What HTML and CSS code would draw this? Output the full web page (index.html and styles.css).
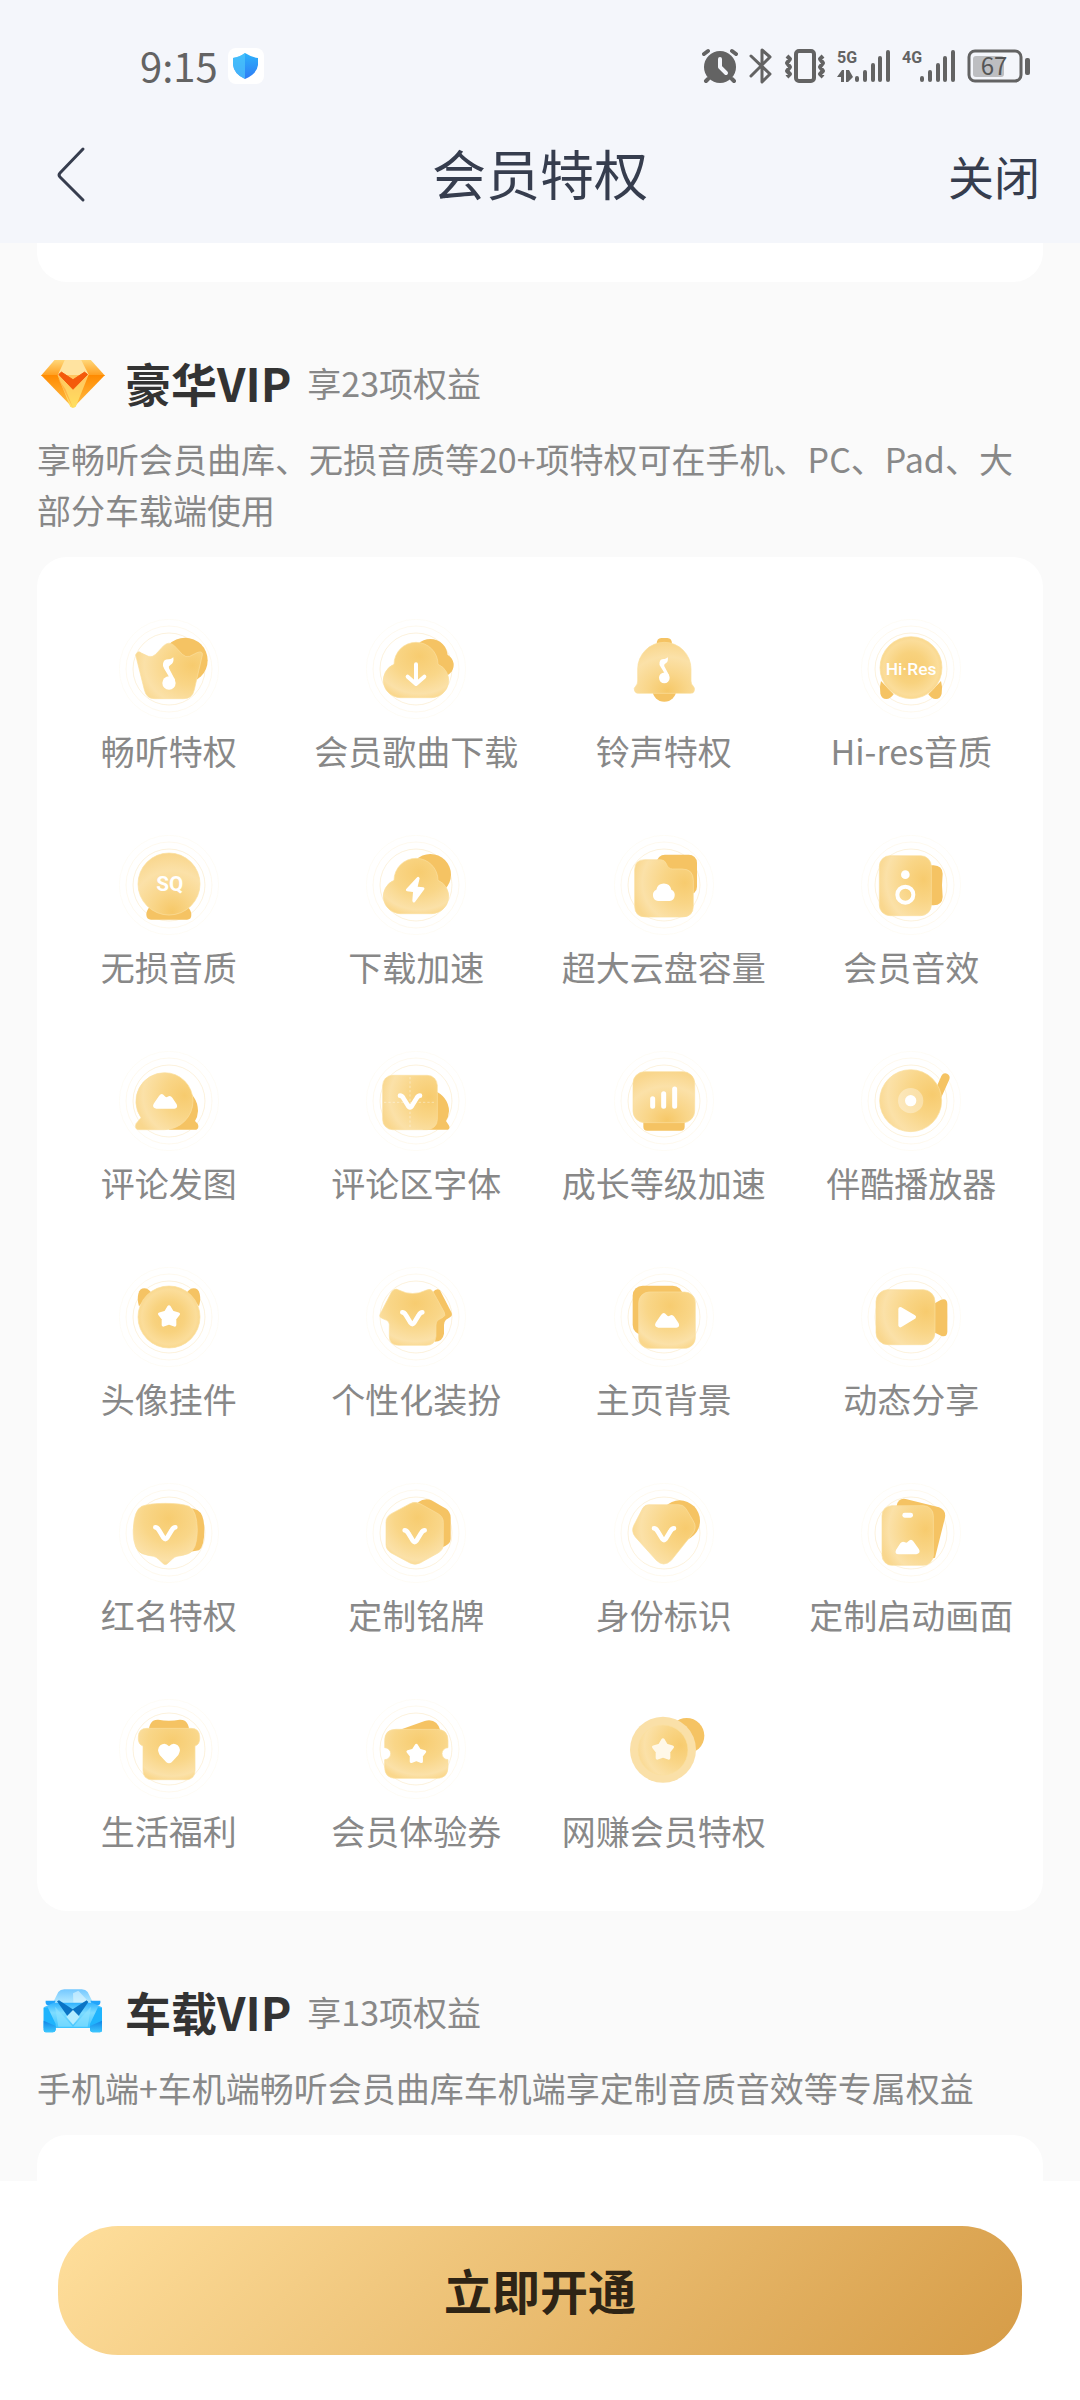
FILE: index.html
```html
<!DOCTYPE html>
<html lang="zh-CN">
<head>
    <meta charset="UTF-8">
    <meta name="viewport" content="width=device-width, initial-scale=1.0">
    <title>会员特权</title>
    <link rel="stylesheet" href="styles.css">
</head>
<body>
    <!-- 公用渐变和图形 -->
    <svg class="defs" width="0" height="0" aria-hidden="true">
        <defs>
            <radialGradient id="gTop" cx="0.55" cy="0.25" r="0.8">
                <stop offset="0" stop-color="#f7cc70"/>
                <stop offset="0.5" stop-color="#f9d688"/>
                <stop offset="0.85" stop-color="#fbe1a8"/>
                <stop offset="1" stop-color="#fad78c"/>
            </radialGradient>
            <radialGradient id="gRight" cx="0.85" cy="0.4" r="0.9">
                <stop offset="0" stop-color="#f7cb6e"/>
                <stop offset="0.4" stop-color="#f9d586"/>
                <stop offset="0.8" stop-color="#fbe1a8"/>
                <stop offset="1" stop-color="#f9d78e"/>
            </radialGradient>
            <radialGradient id="gBottom" cx="0.55" cy="0.95" r="0.95">
                <stop offset="0" stop-color="#f6c868"/>
                <stop offset="0.35" stop-color="#f9d68a"/>
                <stop offset="0.7" stop-color="#fbe1a8"/>
                <stop offset="1" stop-color="#f9d68c"/>
            </radialGradient>
            <radialGradient id="gMid" cx="0.5" cy="0.5" r="0.55">
                <stop offset="0" stop-color="#f7cb70"/>
                <stop offset="0.45" stop-color="#f8d27e"/>
                <stop offset="0.8" stop-color="#fbdd9a"/>
                <stop offset="1" stop-color="#f9d586"/>
            </radialGradient>
            <linearGradient id="diaTop" x1="0" y1="0" x2="0" y2="1">
                <stop offset="0" stop-color="#ffd779"/>
                <stop offset="1" stop-color="#ff9d1c"/>
            </linearGradient>
            <linearGradient id="diaSide" x1="0" y1="0" x2="0" y2="1">
                <stop offset="0" stop-color="#ff8a00"/>
                <stop offset="1" stop-color="#ffc04a"/>
            </linearGradient>
            <linearGradient id="diaMid" x1="0" y1="0" x2="0" y2="1">
                <stop offset="0" stop-color="#ffc460"/>
                <stop offset="1" stop-color="#ffe060"/>
            </linearGradient>
            <linearGradient id="carBody" x1="0" y1="0" x2="0" y2="1">
                <stop offset="0" stop-color="#2fb2ff"/>
                <stop offset="0.4" stop-color="#7ddcff"/>
                <stop offset="1" stop-color="#3cc3ff"/>
            </linearGradient>
            <linearGradient id="carRoof" x1="0" y1="0" x2="0" y2="1">
                <stop offset="0" stop-color="#74c8ff"/>
                <stop offset="1" stop-color="#b8ecff"/>
            </linearGradient>
            <linearGradient id="carWheel" x1="0" y1="0" x2="0" y2="1">
                <stop offset="0" stop-color="#1184e6"/>
                <stop offset="1" stop-color="#3cc8ff"/>
            </linearGradient>
            <linearGradient id="shield" x1="0" y1="0" x2="0" y2="1">
                <stop offset="0" stop-color="#2cb2fb"/>
                <stop offset="1" stop-color="#2f7bf5"/>
            </linearGradient>
        </defs>
        <g id="rings" fill="none" stroke="#f5cf7f">
            <circle cx="150" cy="150" r="149" stroke-width="2" stroke-opacity="0.1"/>
            <circle cx="150" cy="150" r="129" stroke-width="2" stroke-opacity="0.2"/>
            <circle cx="150" cy="150" r="108" stroke-width="2" stroke-opacity="0.4"/>
        </g>
        <path id="cloud" d="M102 236 A52 52 0 0 1 84 136 A66 66 0 0 1 216 136 A52 52 0 0 1 198 236 Z"/>
        <g id="note">
            <circle cx="150" cy="192" r="20"/>
            <path d="M132 134 Q134 120 150 121 Q156 121 163 115 Q166 133 154 138 Q147 142 150 148 L168 182 L160 190 L136 150 Q130 142 132 134 Z"/>
        </g>
        <path id="vee" fill="none" stroke="#fff" stroke-width="14" stroke-linecap="round" d="M102 134 Q108 134 113 143 L127 166 Q132 173 137 166 L151 143 Q156 134 162 134"/>
        <path id="mountain" fill="#fff" d="M112 173 Q98 170 104 158 L120 135 Q128 124 136 134 Q141 141 146 137 Q154 132 160 140 L173 160 Q178 172 166 173 Z"/>
        <polygon id="star" stroke-width="10" stroke-linejoin="round" points="0,-29 10,-13 28,-8 17,6 17,25 0,19 -17,25 -17,6 -28,-8 -10,-13"/>
    </svg>

    <header class="header">
        <div class="status-bar">
            <div class="status-left">
                <span class="time">9:15</span>
                <span class="app-badge">
                    <svg width="25" height="26" viewBox="0 0 25 26">
                        <path fill="url(#shield)" d="M12 0 Q18 4 25 5 V12 Q24 21 12 26 Q1 21 0 12 V5 Q7 4 12 0 Z"/>
                        <path fill="#4fc6fb" fill-opacity="0.7" d="M12 0 V26 Q1 21 0 12 V5 Q7 4 12 0 Z"/>
                    </svg>
                </span>
            </div>
            <div class="status-right">
                <svg width="36" height="36" viewBox="0 0 36 36">
                    <circle cx="18" cy="19" r="16" fill="#636363"/>
                    <path d="M2 6 L6 3 M30 3 L34 6 M6 31 L4 33 M30 31 L32 33" stroke="#636363" stroke-width="4" stroke-linecap="round"/>
                    <path d="M18 11 V19 L24 25" fill="none" stroke="#f4f6fb" stroke-width="4" stroke-linecap="round" stroke-linejoin="round"/>
                </svg>
                <svg width="24" height="36" viewBox="0 0 24 36">
                    <path d="M2 8 L21 26 L13 34 V2 L21 9 L2 28" fill="none" stroke="#636363" stroke-width="3" stroke-linecap="round" stroke-linejoin="round"/>
                </svg>
                <svg width="42" height="36" viewBox="0 0 42 36">
                    <rect x="12" y="3" width="18" height="30" rx="3" fill="none" stroke="#636363" stroke-width="4"/>
                    <path d="M3 8 L6 11 L3 15 L6 19 L3 23 L6 26 L3 29 M39 8 L36 11 L39 15 L36 19 L39 23 L36 26 L39 29" fill="none" stroke="#636363" stroke-width="4" stroke-linejoin="round"/>
                </svg>
                <svg width="54" height="36" viewBox="0 0 54 36">
                    <text class="net" x="0" y="15">5G</text>
                    <path d="M20 30 V32 M28 24 V32 M36 17 V32 M43 10 V32 M51 4 V32" stroke="#636363" stroke-width="4" stroke-linecap="round"/>
                    <path d="M0 29 L5 22 H7 V34 H4 V29 Z M9 22 H12 L16 29 L11 34 H9 Z" fill="#636363"/>
                </svg>
                <svg width="54" height="36" viewBox="0 0 54 36">
                    <text class="net" x="0" y="15">4G</text>
                    <path d="M20 30 V32 M28 24 V32 M36 17 V32 M43 10 V32 M51 4 V32" stroke="#636363" stroke-width="4" stroke-linecap="round"/>
                </svg>
                <svg width="63" height="36" viewBox="0 0 63 36">
                    <rect x="2" y="3" width="52" height="30" rx="6" fill="none" stroke="#636363" stroke-width="3"/>
                    <rect x="6" y="8" width="31" height="21" rx="3" fill="#bdbec1"/>
                    <rect x="58" y="10" width="5" height="17" rx="2" fill="#636363"/>
                    <text class="battery" x="27" y="27" text-anchor="middle">67</text>
                </svg>
            </div>
        </div>
        <nav class="nav-bar">
            <button class="back" aria-label="返回">
                <svg width="30" height="58" viewBox="0 0 30 58">
                    <path d="M27 3 L4 27 Q2 29 4 31 L27 54" fill="none" stroke="#363d4e" stroke-width="3" stroke-linecap="round" stroke-linejoin="round"/>
                </svg>
            </button>
            <h1>会员特权</h1>
            <button class="close">关闭</button>
        </nav>
    </header>

    <main class="content">
        <div class="card card-prev"></div>

        <section class="vip">
            <div class="vip-title">
                <svg class="vip-logo" width="72" height="50" viewBox="-12 -2 218 150">
                    <path fill="url(#diaTop)" d="M41 0 H151 L194 48 H0 Z"/>
                    <path fill="#ffe3a0" d="M72 0 H122 L146 48 H50 Z"/>
                    <path fill="url(#diaSide)" d="M0 46 H52 L97 146 Z"/>
                    <path fill="url(#diaSide)" d="M194 46 H142 L97 146 Z"/>
                    <path fill="url(#diaMid)" d="M50 46 H144 L106 140 Q97 150 88 140 Z"/>
                    <path fill="#ffb347" d="M52 56 L97 146 L74 88 Z"/>
                    <path fill="#f4590b" stroke="#f4590b" stroke-width="3" stroke-linejoin="round" d="M54 44 L62 37 L97 60 L132 37 L141 44 L97 89 Z"/>
                </svg>
                <h2>豪华VIP</h2>
                <span>享23项权益</span>
            </div>
            <p class="vip-desc">享畅听会员曲库、无损音质等20+项特权可在手机、PC、Pad、大部分车载端使用</p>
            <ul class="card benefits">
                <li>
                    <svg viewBox="0 0 300 300">
                        <use href="#rings"/>
                        <circle class="back-shape" cx="198" cy="124" r="68"/>
                        <path class="front" fill="url(#gRight)" d="M52 104 Q58 94 67 102 L88 112 Q100 116 110 106 L134 80 Q150 65 166 80 L190 106 Q200 116 212 112 L234 101 Q252 94 250 108 L226 212 Q220 239 194 239 H106 Q82 239 76 212 L50 108 Z"/>
                        <use href="#note" fill="#fff"/>
                    </svg>
                    <span>畅听特权</span>
                </li>
                <li>
                    <svg viewBox="0 0 300 300">
                        <use href="#rings"/>
                        <circle class="back-shape" cx="193" cy="112" r="52"/>
                        <circle class="back-shape" cx="229" cy="138" r="34"/>
                        <use class="front" href="#cloud" fill="url(#gTop)"/>
                        <path class="line" d="M150 136 V194 M125 173 L150 195 L175 173"/>
                    </svg>
                    <span>会员歌曲下载</span>
                </li>
                <li>
                    <svg viewBox="0 0 300 300">
                        <path class="back-shape" d="M128 75 Q128 57 142 57 H160 Q174 57 174 75 Z"/>
                        <circle class="back-shape" cx="151" cy="212" r="36"/>
                        <path class="front" fill="url(#gBottom)" d="M71 150 A80 80 0 0 1 231 150 V186 Q231 196 238 202 Q244 208 240 218 Q238 223 228 223 H74 Q64 223 62 216 Q58 208 65 202 Q71 196 71 186 Z"/>
                        <use href="#note" fill="#fff" transform="translate(31 23) scale(0.8)"/>
                    </svg>
                    <span>铃声特权</span>
                </li>
                <li>
                    <svg viewBox="0 0 300 300">
                        <use href="#rings"/>
                        <path class="back-shape" d="M60 186 Q54 206 58 224 Q62 240 76 240 Q88 240 98 226 Z"/>
                        <path class="back-shape" d="M240 186 Q246 206 242 224 Q238 240 224 240 Q212 240 202 226 Z"/>
                        <circle class="front" fill="url(#gMid)" cx="150" cy="146" r="93"/>
                        <text class="icon-text" x="150" y="167" font-size="52" text-anchor="middle">Hi·Res</text>
                    </svg>
                    <span>Hi-res音质</span>
                </li>
                <li>
                    <svg viewBox="0 0 300 300">
                        <use href="#rings"/>
                        <path class="back-shape" d="M92 216 Q82 226 82 240 Q83 254 96 254 H204 Q217 254 217 240 Q217 226 206 216 Z"/>
                        <circle class="front" fill="url(#gBottom)" cx="150" cy="147" r="93"/>
                        <text class="icon-text sq" x="152" y="168" font-size="62" text-anchor="middle">SQ</text>
                    </svg>
                    <span>无损音质</span>
                </li>
                <li>
                    <svg viewBox="0 0 300 300">
                        <use href="#rings"/>
                        <circle class="back-shape" cx="193" cy="119" r="62"/>
                        <use class="front" href="#cloud" fill="url(#gTop)"/>
                        <path fill="#fff" d="M152 128 L120 163 Q118 168 123 169 L141 171 L139 197 Q141 206 147 201 L175 163 Q177 158 172 157 L155 155 L161 130 Q158 122 152 128 Z"/>
                    </svg>
                    <span>下载加速</span>
                </li>
                <li>
                    <svg viewBox="0 0 300 300">
                        <use href="#rings"/>
                        <rect class="back-shape" x="128" y="59" width="121" height="121" rx="25"/>
                        <path class="front" fill="url(#gRight)" d="M62 104 Q62 74 92 74 H140 Q152 74 157 86 Q162 102 176 102 H204 Q238 102 238 136 V212 Q238 246 204 246 H96 Q62 246 62 212 Z"/>
                        <path fill="#fff" d="M132 198 A18 18 0 0 1 127 164 A23 23 0 0 1 172 164 A18 18 0 0 1 167 198 Z"/>
                    </svg>
                    <span>超大云盘容量</span>
                </li>
                <li>
                    <svg viewBox="0 0 300 300">
                        <use href="#rings"/>
                        <path class="back-shape" d="M200 91 H218 Q244 92 245 116 Q241 150 245 186 Q244 210 218 211 H200 Z"/>
                        <rect class="front" fill="url(#gRight)" x="55" y="62" width="156" height="180" rx="32"/>
                        <circle cx="133" cy="119" r="13" fill="#fff"/>
                        <circle class="line" cx="133" cy="179" r="24"/>
                    </svg>
                    <span>会员音效</span>
                </li>
                <li>
                    <svg viewBox="0 0 300 300">
                        <use href="#rings"/>
                        <path class="back-shape" d="M190 112 Q236 132 237 180 Q236 198 228 210 L236 218 Q242 230 232 236 H150 Z"/>
                        <path class="front" fill="url(#gRight)" d="M137 65 A85 85 0 0 1 222 150 A86 86 0 0 1 137 236 H58 Q46 234 51 218 L66 200 A86 86 0 0 1 137 65 Z"/>
                        <use href="#mountain"/>
                    </svg>
                    <span>评论发图</span>
                </li>
                <li>
                    <svg viewBox="0 0 300 300">
                        <use href="#rings"/>
                        <path class="back-shape" d="M200 116 Q248 136 249 180 Q248 198 240 210 L248 222 Q254 232 246 236 H170 Z"/>
                        <rect class="front" fill="url(#gRight)" x="50" y="73" width="164" height="163" rx="30"/>
                        <path d="M132 78 V232 M54 154 H210" stroke="#fff" stroke-opacity="0.4" stroke-width="3" stroke-dasharray="7 6"/>
                        <use href="#vee"/>
                    </svg>
                    <span>评论区字体</span>
                </li>
                <li>
                    <svg viewBox="0 0 300 300">
                        <use href="#rings"/>
                        <rect class="back-shape" x="88" y="201" width="124" height="38" rx="12"/>
                        <rect class="front" fill="url(#gBottom)" x="57" y="62" width="185" height="153" rx="35"/>
                        <path d="M116 143 V166 M149 128 V166 M182 114 V166" stroke="#fff" stroke-width="15" stroke-linecap="round"/>
                    </svg>
                    <span>成长等级加速</span>
                </li>
                <li>
                    <svg viewBox="0 0 300 300">
                        <use href="#rings"/>
                        <path d="M253 80 L230 132" stroke="#f5c363" stroke-width="26" stroke-linecap="round"/>
                        <circle class="front" fill="url(#gRight)" cx="149" cy="149" r="93"/>
                        <circle cx="149" cy="149" r="38" fill="#fff" fill-opacity="0.35"/>
                        <circle cx="149" cy="149" r="17" fill="#fff"/>
                    </svg>
                    <span>伴酷播放器</span>
                </li>
                <li>
                    <svg viewBox="0 0 300 300">
                        <use href="#rings"/>
                        <path class="back-shape" d="M60 118 Q54 96 58 80 Q62 64 76 64 Q88 64 98 78 Z"/>
                        <path class="back-shape" d="M240 118 Q246 96 242 80 Q238 64 224 64 Q212 64 202 78 Z"/>
                        <circle class="front" fill="url(#gMid)" cx="150" cy="150" r="93"/>
                        <use href="#star" fill="#fff" stroke="#fff" transform="translate(150 149)"/>
                    </svg>
                    <span>头像挂件</span>
                </li>
                <li>
                    <svg viewBox="0 0 300 300">
                        <use href="#rings"/>
                        <path class="back-shape" d="M200 76 Q212 62 222 70 L256 136 Q261 146 252 151 L240 158 Q234 164 234 174 V200 Q230 224 206 224 Z"/>
                        <path class="front" fill="url(#gTop)" d="M84 68 Q90 64 98 69 Q140 90 182 69 Q194 63 201 74 L235 136 Q240 146 231 151 L216 159 Q210 164 210 174 V208 Q208 235 180 235 H98 Q70 235 70 208 V172 Q70 164 62 160 L46 153 Q38 148 43 140 L76 76 Q79 70 84 68 Z"/>
                        <use href="#vee" transform="translate(7 2)"/>
                    </svg>
                    <span>个性化装扮</span>
                </li>
                <li>
                    <svg viewBox="0 0 300 300">
                        <use href="#rings"/>
                        <rect class="back-shape" x="56" y="56" width="150" height="148" rx="30"/>
                        <rect class="front" fill="url(#gTop)" x="74" y="75" width="170" height="169" rx="32"/>
                        <use href="#mountain" transform="translate(21 9)"/>
                    </svg>
                    <span>主页背景</span>
                </li>
                <li>
                    <svg viewBox="0 0 300 300">
                        <use href="#rings"/>
                        <path class="back-shape" d="M216 112 L240 98 Q258 92 259 110 V194 Q258 212 240 206 L216 194 Z"/>
                        <rect class="front" fill="url(#gRight)" x="45" y="68" width="177" height="165" rx="36"/>
                        <path fill="#fff" stroke="#fff" stroke-width="12" stroke-linejoin="round" d="M118 126 L159 150 L118 175 Z"/>
                    </svg>
                    <span>动态分享</span>
                </li>
                <li>
                    <svg viewBox="0 0 300 300">
                        <use href="#rings"/>
                        <path class="back-shape" d="M180 72 Q214 72 236 82 Q256 94 256 140 Q256 190 240 202 Q214 208 190 208 Z"/>
                        <path class="front" fill="url(#gTop)" d="M139 61 Q186 61 210 70 Q234 82 235 142 Q234 204 208 212 Q190 218 174 220 Q166 222 160 228 L145 242 Q139 247 133 242 L118 228 Q112 222 104 220 Q88 218 70 212 Q44 204 43 142 Q44 82 68 70 Q92 61 139 61 Z"/>
                        <use href="#vee" transform="translate(7 -1)"/>
                    </svg>
                    <span>红名特权</span>
                </li>
                <li>
                    <svg viewBox="0 0 300 300">
                        <use href="#rings"/>
                        <path class="back-shape" d="M156 58 Q176 44 196 52 L238 76 Q254 86 254 104 V168 Q254 184 226 194 Z"/>
                        <path class="front" fill="url(#gTop)" d="M132 62 Q147 54 162 62 L216 92 Q232 101 232 118 V184 Q232 201 216 210 L162 240 Q147 248 132 240 L76 210 Q60 201 60 184 V118 Q60 101 76 92 Z"/>
                        <use href="#vee" transform="translate(14 8)"/>
                    </svg>
                    <span>定制铭牌</span>
                </li>
                <li>
                    <svg viewBox="0 0 300 300">
                        <use href="#rings"/>
                        <circle class="back-shape" cx="197" cy="113" r="61"/>
                        <path class="front" fill="url(#gRight)" d="M104 65 H194 Q208 65 216 77 L238 114 Q250 134 236 152 L172 232 Q149 254 127 232 L64 162 Q50 144 60 126 L86 76 Q92 65 104 65 Z"/>
                        <use href="#vee" transform="translate(18 2)"/>
                    </svg>
                    <span>身份标识</span>
                </li>
                <li>
                    <svg viewBox="0 0 300 300">
                        <use href="#rings"/>
                        <path class="back-shape" d="M107 68 Q112 44 134 48 L234 73 Q256 82 252 104 L222 224 L200 230 Z"/>
                        <rect class="front" fill="url(#gRight)" x="63" y="68" width="154" height="179" rx="30"/>
                        <rect x="124" y="89" width="32" height="15" rx="7" fill="#fff"/>
                        <use href="#mountain" transform="translate(278 41) scale(-1 1)"/>
                    </svg>
                    <span>定制启动画面</span>
                </li>
                <li>
                    <svg viewBox="0 0 300 300">
                        <use href="#rings"/>
                        <path class="back-shape" d="M89 100 Q90 60 118 62 Q150 68 182 62 Q210 60 211 100 Z"/>
                        <path class="front" fill="url(#gTop)" d="M84 88 H216 Q242 88 242 114 V120 Q242 136 228 141 V214 Q228 242 200 242 H100 Q72 242 72 214 V141 Q58 136 58 120 V114 Q58 88 84 88 Z"/>
                        <path fill="#fff" d="M150 193 Q146 193 142 190 L122 168 Q112 150 124 139 Q138 128 150 142 Q162 128 176 139 Q188 150 178 168 L158 190 Q154 193 150 193 Z"/>
                    </svg>
                    <span>生活福利</span>
                </li>
                <li>
                    <svg viewBox="0 0 300 300">
                        <use href="#rings"/>
                        <path class="back-shape" d="M98 94 L176 66 Q212 56 224 96 Z"/>
                        <path class="front" fill="url(#gTop)" d="M90 91 H212 Q246 91 246 125 V146 A18 18 0 0 0 246 182 V204 Q246 238 212 238 H90 Q56 238 56 204 V182 A18 18 0 0 0 56 146 V125 Q56 91 90 91 Z"/>
                        <use href="#star" fill="#fff" stroke="#fff" transform="translate(151 165) scale(0.9)"/>
                    </svg>
                    <span>会员体验券</span>
                </li>
                <li>
                    <svg viewBox="0 0 300 300">
                        <circle class="back-shape" cx="218" cy="110" r="53"/>
                        <circle cx="147" cy="152" r="99" fill="#fae0a8"/>
                        <circle class="front" fill="url(#gRight)" cx="147" cy="153" r="75"/>
                        <use href="#star" fill="#fff8e8" stroke="#fff8e8" transform="translate(147 152)"/>
                    </svg>
                    <span>网赚会员特权</span>
                </li>
            </ul>
        </section>

        <section class="vip">
            <div class="vip-title">
                <svg class="vip-logo" width="72" height="50" viewBox="-20 -4 216 150">
                    <path fill="url(#carRoof)" d="M44 8 Q50 0 62 0 H114 Q126 0 132 8 L150 44 H26 Z"/>
                    <path fill="#dff6ff" fill-opacity="0.6" d="M88 12 L104 4 L132 34 L90 60 Z"/>
                    <path fill="#22a4fb" d="M6 34 H36 L30 48 H14 Q4 46 6 34 Z M170 34 H140 L146 48 H162 Q172 46 170 34 Z"/>
                    <path fill="url(#carBody)" d="M0 54 L30 40 H146 L175 54 V116 H0 Z"/>
                    <path fill="#1fb4fd" d="M0 56 L12 54 L36 104 V122 Q34 129 28 129 H6 Q0 129 0 122 Z M175 56 L163 54 L139 104 V122 Q141 129 147 129 H169 Q175 129 175 122 Z"/>
                    <path fill="url(#carWheel)" d="M0 94 L36 110 V122 Q34 129 28 129 H6 Q0 129 0 122 Z M175 94 L139 110 V122 Q141 129 147 129 H169 Q175 129 175 122 Z"/>
                    <path fill="#8fe2ff" fill-opacity="0.6" d="M34 52 L88 112 L142 52 L132 112 H44 Z"/>
                    <path fill="#0b74c4" d="M40 36 L46 33 L87 60 L129 33 L134 38 L88 104 Z"/>
                    <path fill="#b4ecff" d="M68 82 L88 62 L108 82 L88 106 Z"/>
                </svg>
                <h2>车载VIP</h2>
                <span>享13项权益</span>
            </div>
            <p class="vip-desc">手机端+车机端畅听会员曲库车机端享定制音质音效等专属权益</p>
            <div class="card card-next"></div>
        </section>
    </main>

    <footer class="footer">
        <button class="open-btn">立即开通</button>
    </footer>
</body>
</html>
```
FILE: styles.css
```css
* {
    box-sizing: border-box;
    margin: 0;
    padding: 0;
}

body {
    display: flex;
    flex-direction: column;
    height: 100vh;
    background: #fafafa;
    font-family: "Noto Sans CJK SC", sans-serif;
    color: #333;
    overflow: hidden;
}

button {
    border: none;
    background: none;
    font-family: inherit;
    cursor: pointer;
}

.defs {
    position: absolute;
}

.header {
    flex-shrink: 0;
    background: #f4f6fb;
}

.status-bar {
    display: flex;
    justify-content: space-between;
    align-items: center;
    height: 107px;
    padding: 25px 50px 0 140px;
    color: #636363;
}

.status-left {
    display: flex;
    align-items: center;
    gap: 10px;
}

.time {
    padding-bottom: 2px;
    font-size: 40px;
    line-height: 48px;
}

.app-badge {
    display: flex;
    align-items: center;
    justify-content: center;
    width: 36px;
    height: 36px;
    border-radius: 8px;
    background: #fff;
}

.status-right {
    display: flex;
    align-items: center;
    gap: 11px;
}

.net {
    font-family: Roboto, sans-serif;
    font-size: 16px;
    font-weight: bold;
    fill: #636363;
}

.battery {
    font-size: 24px;
    fill: #555;
}

.nav-bar {
    display: grid;
    grid-template-columns: 1fr auto 1fr;
    align-items: center;
    height: 136px;
    padding: 0 40px;
    color: #363d4e;
}

.nav-bar h1 {
    padding-bottom: 4px;
    font-size: 54px;
    font-weight: 400;
    line-height: 72px;
}

.back {
    display: flex;
    justify-self: start;
    padding: 0 16px;
}

.close {
    justify-self: end;
    font-size: 46px;
    line-height: 72px;
    color: inherit;
}

.content {
    flex: 1;
    min-height: 0;
    padding: 0 37px;
    overflow: hidden;
}

.card {
    border-radius: 30px;
    background: #fff;
}

.card-prev {
    height: 39px;
    border-radius: 0 0 30px 30px;
}

.card-next {
    height: 400px;
}

.vip {
    padding-top: 70px;
}

.vip-title {
    display: flex;
    align-items: center;
    height: 64px;
}

.vip-logo {
    margin-right: 16px;
}

.vip-title h2 {
    margin-right: 16px;
    padding-bottom: 4px;
    font-size: 46px;
    font-weight: 700;
    line-height: 60px;
}

.vip-title span {
    padding-bottom: 4px;
    font-size: 34px;
    line-height: 51px;
    color: #888;
}

.vip-desc {
    padding: 17px 0 22px;
    font-size: 34px;
    line-height: 51px;
    color: #888;
}

.benefits {
    display: grid;
    grid-template-columns: repeat(4, 1fr);
    row-gap: 59px;
    padding: 62px 8px 55px;
    list-style: none;
}

.benefits li {
    display: flex;
    flex-direction: column;
    align-items: center;
    gap: 6px;
}

.benefits svg {
    width: 100px;
    height: 100px;
}

.benefits span {
    font-size: 34px;
    line-height: 51px;
    color: #888;
    white-space: nowrap;
}

.back-shape {
    fill: #f5c363;
}

.front {
    stroke: #fbdf9f;
    stroke-width: 2;
}

.line {
    fill: none;
    stroke: #fff;
    stroke-width: 12;
    stroke-linecap: round;
    stroke-linejoin: round;
}

.icon-text {
    font-family: Roboto, sans-serif;
    font-weight: 500;
    fill: #fff;
}

.sq {
    font-weight: bold;
}

.footer {
    flex-shrink: 0;
    padding: 45px 58px;
    background: #fff;
}

.open-btn {
    display: block;
    width: 100%;
    height: 129px;
    padding-bottom: 4px;
    border-radius: 60px;
    background: linear-gradient(135deg, #ffdf9c, #d69c47);
    font-size: 48px;
    font-weight: 700;
    color: #2e2415;
}
```
